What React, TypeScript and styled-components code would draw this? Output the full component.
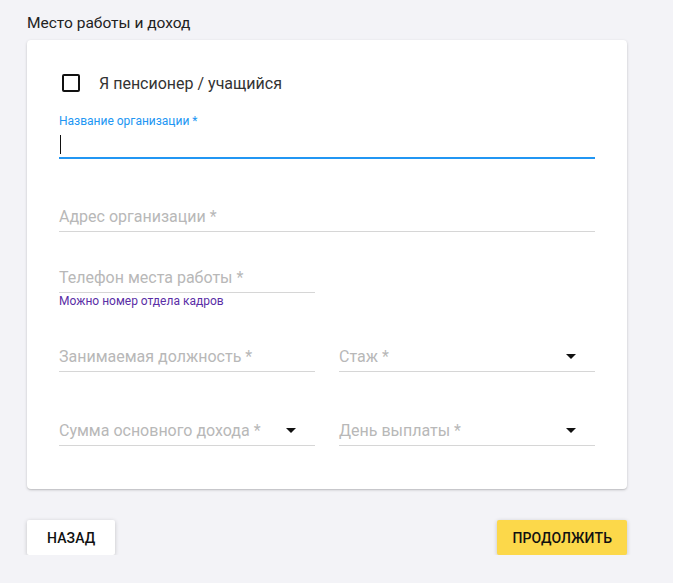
import styled, { createGlobalStyle } from 'styled-components';

const Global = createGlobalStyle`
  html, body { margin: 0; padding: 0; background: #f3f3f7; }
  body { font-family: Roboto, "Noto Sans", Arial, sans-serif; color: #212121; }
`;

const Page = styled.div` width: 600px; padding: 13px 0 0 27px; `;
const Heading = styled.div` font-size: 15.5px; line-height: 20px; color: #222; margin-bottom: 7px; `;
const Card = styled.div`
  background: #fff; border-radius: 4px; box-shadow: 0 1px 3px rgba(0,0,0,0.18), 0 1px 1px rgba(0,0,0,0.08);
  padding: 34px 32px 0; height: 449px; box-sizing: border-box;
`;
const CheckRow = styled.label` display: flex; align-items: center; gap: 19px; height: 18px; font-size: 16px; color: #333; `;
const Box = styled.span` width: 18px; height: 18px; box-sizing: border-box; border: 2px solid #111; border-radius: 2px; margin-left: 3px; `;
const Row = styled.div<{ $mt: number }>` display: grid; grid-template-columns: 256px 256px; column-gap: 24px; margin-top: ${(p) => p.$mt}px; `;
const Field = styled.div<{ $wide?: boolean }>` grid-column: ${(p) => (p.$wide ? '1 / 3' : 'auto')}; `;
const Label = styled.div<{ $hidden?: boolean }>` font-size: 12px; line-height: 16px; color: #2196f3; visibility: ${(p) => (p.$hidden ? 'hidden' : 'visible')}; `;
const Input = styled.div<{ $focus?: boolean }>`
  height: 30px; box-sizing: border-box; display: flex; align-items: center; justify-content: space-between;
  border-bottom: ${(p) => (p.$focus ? '2px solid #2196f3' : '1px solid #d6d6d6')};
  font-size: 16px; color: #b8b8b8; padding-right: 19px;
`;
const Caret = styled.span` width: 1px; height: 19px; background: #111; margin-left: 1px; margin-top: 2px; `;
const Arrow = styled.span` width: 0; height: 0; border-left: 5px solid transparent; border-right: 5px solid transparent; border-top: 5px solid #111; `;
const Helper = styled.div` font-size: 12px; line-height: 16px; color: #5a2ea6; `;
const Actions = styled.div` display: flex; justify-content: space-between; margin-top: 31px; `;
const Button = styled.button<{ $primary?: boolean }>`
  height: 35px; padding: 0 ${(p) => (p.$primary ? 15 : 20)}px; border: none; border-radius: 2px;
  background: ${(p) => (p.$primary ? '#fcd84a' : '#fff')};
  box-shadow: 0 1px 4px rgba(0,0,0,0.2);
  font-family: Roboto, Arial, sans-serif; font-size: 14px; font-weight: 500; color: #111; letter-spacing: 0.1px; text-transform: uppercase;
`;

function TextField({ placeholder, select, focus, label }: { placeholder?: string; select?: boolean; focus?: boolean; label?: string }) {
  return (
    <>
      <Label $hidden={!label}>{label || '.'}</Label>
      <Input $focus={focus}>
        {focus ? <Caret /> : <span>{placeholder}</span>}
        {select && <Arrow />}
      </Input>
    </>
  );
}

export default function App() {
  return (
    <Page>
      <Global />
      <Heading>Место работы и доход</Heading>
      <Card>
        <CheckRow><Box />Я пенсионер / учащийся</CheckRow>
        <Row $mt={21}>
          <Field $wide><TextField focus label="Название организации *" /></Field>
        </Row>
        <Row $mt={27}>
          <Field $wide><TextField placeholder="Адрес организации *" /></Field>
        </Row>
        <Row $mt={15}>
          <Field>
            <TextField placeholder="Телефон места работы *" />
            <Helper>Можно номер отдела кадров</Helper>
          </Field>
        </Row>
        <Row $mt={17}>
          <Field><TextField placeholder="Занимаемая должность *" /></Field>
          <Field><TextField placeholder="Стаж *" select /></Field>
        </Row>
        <Row $mt={28}>
          <Field><TextField placeholder="Сумма основного дохода *" select /></Field>
          <Field><TextField placeholder="День выплаты *" select /></Field>
        </Row>
      </Card>
      <Actions>
        <Button>Назад</Button>
        <Button $primary>Продолжить</Button>
      </Actions>
    </Page>
  );
}
